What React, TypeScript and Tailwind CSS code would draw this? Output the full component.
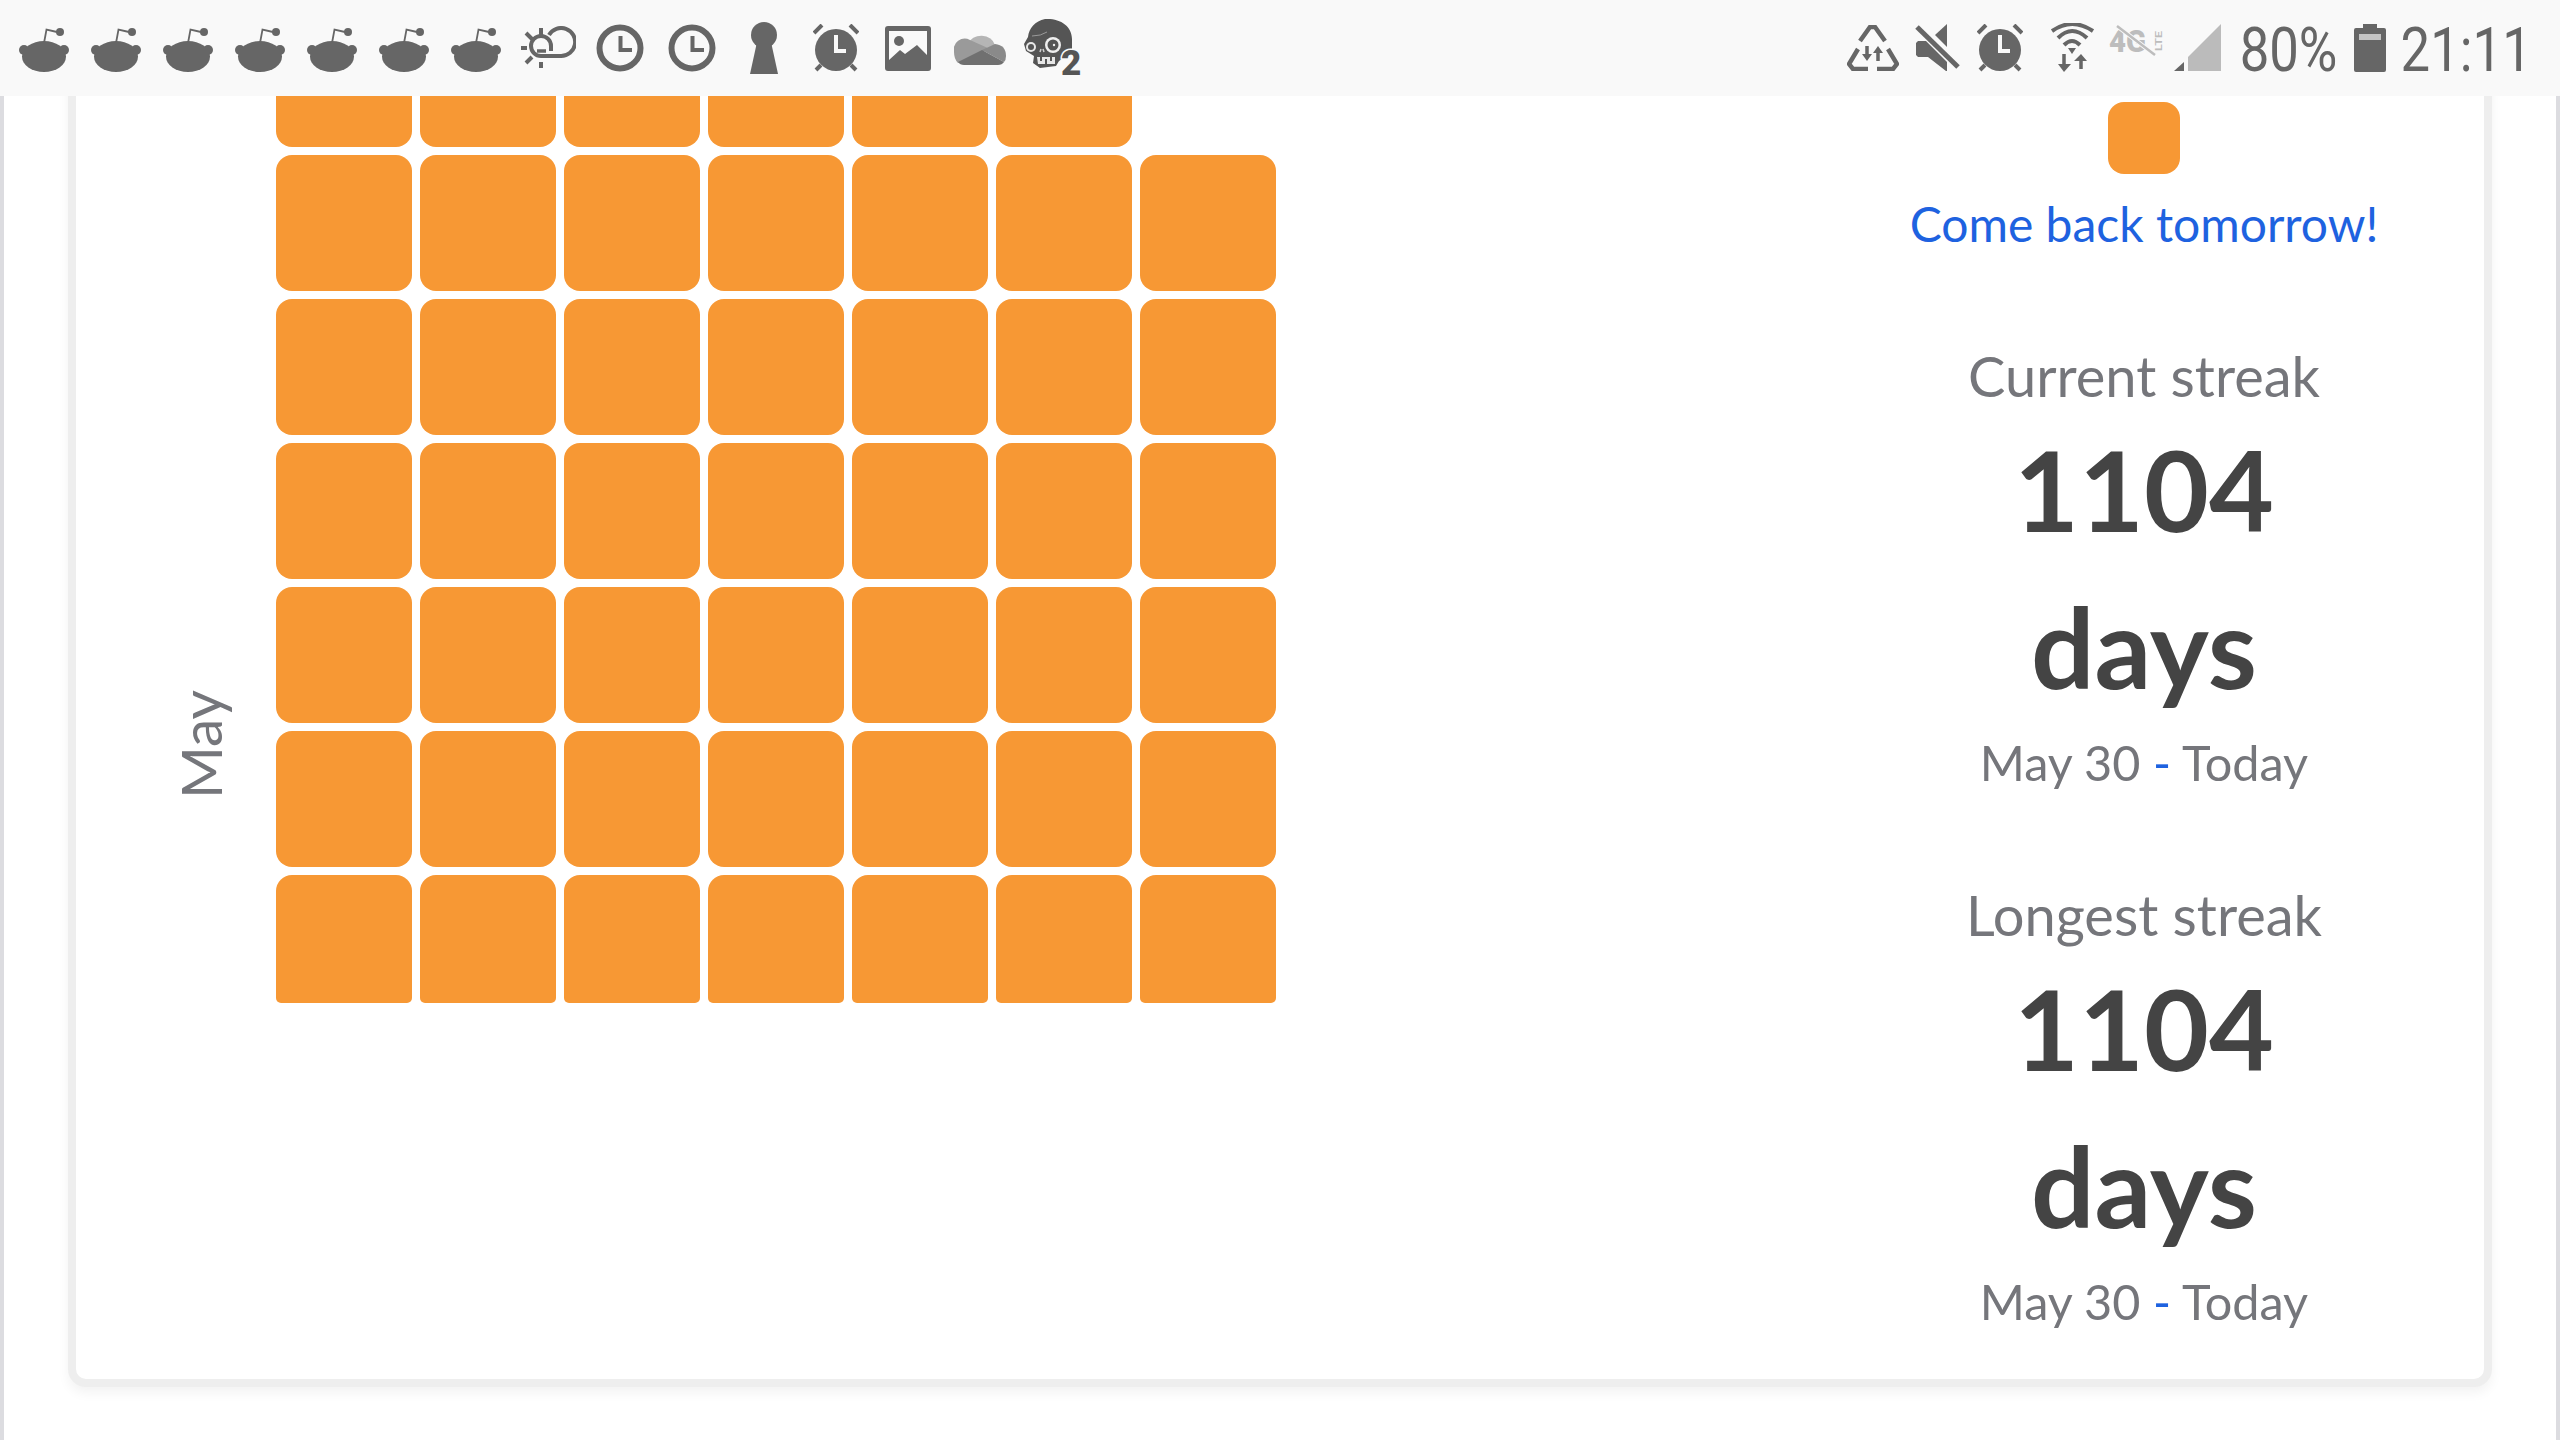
const GRAY = '#666666';

function Reddit() {
  return (
    <svg width="50" height="46" viewBox="0 0 50 46" className="shrink-0 mt-[4px]">
      <path d="M25 16 L27.5 2.5 L38 5" fill="none" stroke={GRAY} strokeWidth="1.8" />
      <circle cx="41" cy="5" r="4" fill={GRAY} />
      <circle cx="5" cy="23" r="5" fill={GRAY} />
      <circle cx="45" cy="23" r="5" fill={GRAY} />
      <ellipse cx="25" cy="29.5" rx="22" ry="15.5" fill={GRAY} />
    </svg>
  );
}

function SunCloud() {
  return (
    <svg width="56" height="44" viewBox="0 0 56 44" className="shrink-0 ml-[19px]" fill="none" stroke={GRAY}>
      <path d="M29 9 A14 14 0 1 1 41 30 H21 A10 10 0 1 1 31 20 V25" strokeWidth="4" />
      <path d="M17 25 H26" strokeWidth="3.5" />
      <path d="M1 22 H7 M21 2 V9 M21 36 V42 M6 7 L12 13 M6 37 L12 31" strokeWidth="4" />
    </svg>
  );
}

function Clock() {
  return (
    <svg width="48" height="48" viewBox="0 0 48 48" className="shrink-0" fill="none" stroke={GRAY}>
      <circle cx="24" cy="24" r="20.5" strokeWidth="6" />
      <path d="M24.5 12 V26 H36" strokeWidth="4" />
    </svg>
  );
}

function Keyhole() {
  return (
    <svg width="28" height="52" viewBox="0 0 28 52" className="shrink-0 ml-[34px]" fill={GRAY}>
      <circle cx="14" cy="13" r="13" />
      <path d="M7 20 H21 L28 52 H0 Z" />
    </svg>
  );
}

function Alarm({ className }: { className: string }) {
  return (
    <svg width="46" height="48" viewBox="0 0 46 48" className={`shrink-0 ${className}`}>
      <circle cx="23" cy="26" r="21" fill={GRAY} />
      <path d="M1 9 L9 1 M45 9 L37 1 M3 46 L8 41 M43 46 L38 41" stroke={GRAY} strokeWidth="4" fill="none" />
      <path d="M21 11 H25 V25 H33 V29 H21 Z" fill="#f9f9f9" />
    </svg>
  );
}

function ImageIcon() {
  return (
    <svg width="46" height="45" viewBox="0 0 46 45" className="shrink-0 ml-[26px]">
      <rect width="46" height="45" rx="3" fill={GRAY} />
      <rect x="4" y="5" width="38" height="30" fill="#f9f9f9" />
      <circle cx="14" cy="15" r="5" fill={GRAY} />
      <path d="M4 34 L15 24 L20 28 L32 19 L42 29 V37 H4 Z" fill={GRAY} />
    </svg>
  );
}

function CloudIcon() {
  return (
    <svg width="52" height="33" viewBox="0 0 52 33" className="shrink-0 ml-[23px]">
      <path d="M14 12 A14 12 0 0 1 41 13 L28 18 Z" fill="#b5b5b5" />
      <path d="M16 8 L36 17 L4 31 Q0 27 0 20 A11 11 0 0 1 16 8 Z" fill="#9a9a9a" />
      <path d="M28 18 L41 12 Q52 13 52 24 Q52 28 50 30 Z" fill="#8a8a8a" />
      <path d="M4 30 L28 18 L50 30 Q48 33 44 33 H10 Q6 33 4 30 Z" fill="#707070" />
    </svg>
  );
}

function Zombie() {
  return (
    <svg width="58" height="58" viewBox="0 0 58 58" className="shrink-0 ml-[17px] overflow-visible">
      <path d="M22 0 C37 -1 49 7 49 20 V33 L36 42 L33 47 L17 49 L10 44 L11 37 L3 32 L1 25 L5 18 C6 9 12 2 22 0 Z" fill="#555555" />
      <circle cx="8" cy="28" r="5" fill="#e8e8e8" />
      <circle cx="8" cy="28" r="3" fill="#555555" />
      <circle cx="30" cy="26" r="8" fill="#efefef" />
      <circle cx="30" cy="26" r="5.5" fill="#555555" />
      <circle cx="31" cy="26" r="1.2" fill="#efefef" />
      <path d="M14 38 H32 V45 H15 Z" fill="#e6e6e6" />
      <path d="M18 38 V42 M23 40 V45 M28 38 V42" stroke="#555555" strokeWidth="2" />
      <path d="M9 17 Q18 17 24 13" stroke="#9a9a9a" strokeWidth="1" fill="none" />
      <path d="M17 33 L18 30 M21 33 L20 30" stroke="#cfcfcf" strokeWidth="1.5" fill="none" />
      <text x="38" y="56" fontFamily="Roboto, sans-serif" fontWeight="900" fontSize="35" fill="#555555" stroke="#f9f9f9" strokeWidth="3" paintOrder="stroke">2</text>
    </svg>
  );
}

function Recycle() {
  return (
    <svg width="52" height="46" viewBox="0 0 52 46" className="shrink-0" fill="none" stroke={GRAY} strokeWidth="4.5">
      <path d="M13 16 L23 2 H28 L38 16" />
      <path d="M11 24 L2 39 L6 44 H21" />
      <path d="M41 24 L50 39 L46 44 H30" />
      <path d="M20 21 V32 M31 26 V36" strokeWidth="3.5" />
      <path d="M15 29 H25 L20 36 Z M26 28 H36 L31 21 Z" fill={GRAY} stroke="none" />
    </svg>
  );
}

function Mute() {
  return (
    <svg width="46" height="48" viewBox="0 0 46 48" className="shrink-0 ml-[15px]">
      <path d="M2 19 L4 17 H12 L33 38 V47 H32 L14 33 H4 L2 31 Z" fill={GRAY} />
      <path d="M21 11 L33 0 V23 Z" fill={GRAY} />
      <path d="M3 3 L44 43" stroke={GRAY} strokeWidth="5" />
    </svg>
  );
}

function Wifi() {
  return (
    <svg width="44" height="50" viewBox="0 0 44 50" className="shrink-0 ml-[28px]" fill="none" stroke={GRAY} strokeWidth="4">
      <path d="M1 8 Q21 -6 42 8" />
      <path d="M7 15 Q21 1 36 15" />
      <path d="M13 22 Q21 14 29 22" />
      <path d="M17 25 H25 L21 31 Z" fill={GRAY} stroke="none" />
      <path d="M13 31 V42 M30 38 V46" strokeWidth="3.5" />
      <path d="M7 41 H20 L13 49 Z M23 38 H36 L30 31 Z" fill={GRAY} stroke="none" />
    </svg>
  );
}

function Lte() {
  return (
    <svg width="56" height="32" viewBox="0 0 56 32" className="shrink-0 ml-[13px] self-start mt-[25px] overflow-visible">
      <text x="1" y="27" fontFamily="Roboto, sans-serif" fontWeight="900" fontSize="31" textLength="37" lengthAdjust="spacingAndGlyphs" fill="#bdbdbd">4G</text>
      <text x="0" y="0" transform="translate(54 26) rotate(-90)" fontFamily="Roboto, sans-serif" fontWeight="700" fontSize="8.5" textLength="20" lengthAdjust="spacingAndGlyphs" fill="#bdbdbd">LTE</text>
      <path d="M9 1 L47 30" stroke="#f9f9f9" strokeWidth="4.5" />
      <path d="M9 1 L47 30" stroke="#bdbdbd" strokeWidth="2.5" />
    </svg>
  );
}

function Signal() {
  return (
    <svg width="47" height="48" viewBox="0 0 47 48" className="shrink-0 ml-[10px]">
      <path d="M14 47 V33 L47 0 V47 Z" fill="#bbbbbb" />
      <path d="M0 47 H10 V38 Z" fill={GRAY} />
    </svg>
  );
}

function Battery() {
  return (
    <svg width="32" height="48" viewBox="0 0 32 48" className="shrink-0 ml-[18px]">
      <path d="M9 0 H23 V4 H30 Q32 4 32 6 V46 Q32 48 30 48 H2 Q0 48 0 46 V6 Q0 4 2 4 H9 Z" fill={GRAY} />
      <rect x="5" y="10" width="22" height="6" fill="#c4c4c4" />
    </svg>
  );
}

function StatusText({ width, className, children }: { width: string; className: string; children: string }) {
  return (
    <span className={`${width} ${className} shrink-0 flex justify-center pt-[3px] font-['Roboto',sans-serif] font-normal text-[62px] leading-none text-[#666666]`}>
      <span className="scale-x-[0.85] whitespace-nowrap">{children}</span>
    </span>
  );
}

function StatusBar() {
  return (
    <div className="h-24 shrink-0 bg-[#f9f9f9] flex items-center pl-[19px]">
      <div className="flex gap-[22px] items-center">
        {Array.from({ length: 7 }).map((_, i) => (
          <Reddit key={i} />
        ))}
      </div>
      <SunCloud />
      <div className="flex gap-[24px] ml-[20px]">
        <Clock />
        <Clock />
      </div>
      <Keyhole />
      <Alarm className="ml-[35px]" />
      <ImageIcon />
      <CloudIcon />
      <Zombie />
      <div className="ml-auto h-24 flex items-center pr-[32px]">
        <Recycle />
        <Mute />
        <Alarm className="ml-[17px]" />
        <Wifi />
        <Lte />
        <Signal />
        <StatusText width="w-[95px]" className="ml-[20px]">80%</StatusText>
        <Battery />
        <StatusText width="w-[124px]" className="ml-[18px]">21:11</StatusText>
      </div>
    </div>
  );
}

function StreakBlock({ title, count, className }: { title: string; count: string; className: string }) {
  return (
    <div className={`flex flex-col items-center ${className}`}>
      <div className="text-[56px] leading-[68px] text-[#75767b]">{title}</div>
      <div className="text-[112px] leading-[157px] font-bold text-[#444444] text-center">
        {count}
        <br />
        days
      </div>
      <div className="text-[48.6px] leading-[64px] text-[#75767b] mt-[6px]">
        May 30 <span className="text-[#1e62e0]">-</span> Today
      </div>
    </div>
  );
}

const rows = [6, 7, 7, 7, 7, 7, 7];

export default function App() {
  return (
    <div className="w-[2560px] h-[1440px] bg-white flex flex-col overflow-hidden font-['Lato',sans-serif]">
      <StatusBar />
      <div className="flex-1 overflow-hidden border-x-4 border-[#dcdce0] px-[64px]">
        <div className="-mt-[100px] h-[1391px] bg-white border-8 border-[#eeeeee] rounded-[18px] shadow-[0_6px_12px_rgba(0,0,0,0.05)] flex">
          <div className="w-[200px] shrink-0 flex justify-start pl-[96px] pt-[686px]">
            <span className="[writing-mode:vertical-rl] rotate-180 text-[57px] leading-[56px] text-[#75767b] h-fit">May</span>
          </div>
          <div className="pt-[7px]">
            <div className="grid grid-cols-[repeat(7,136px)] gap-[8px]">
              {rows.map((count, r) =>
                Array.from({ length: 7 }).map((_, c) =>
                  c < count ? (
                    <div
                      key={`${r}-${c}`}
                      className={r === 6 ? 'h-[128px] bg-[#f79834] rounded-t-[16px] rounded-b-[5px]' : 'h-[136px] bg-[#f79834] rounded-[16px]'}
                    />
                  ) : (
                    <div key={`${r}-${c}`} />
                  )
                )
              )}
            </div>
          </div>
          <div className="ml-auto mr-[40px] w-[600px] flex flex-col items-center pt-[98px]">
            <div className="w-[72px] h-[72px] rounded-[16px] bg-[#f79834]" />
            <div className="text-[48px] leading-[64px] text-[#1e62e0] mt-[18px]">Come back tomorrow!</div>
            <StreakBlock title="Current streak" count="1104" className="mt-[86px]" />
            <StreakBlock title="Longest streak" count="1104" className="mt-[87px]" />
          </div>
        </div>
      </div>
    </div>
  );
}
